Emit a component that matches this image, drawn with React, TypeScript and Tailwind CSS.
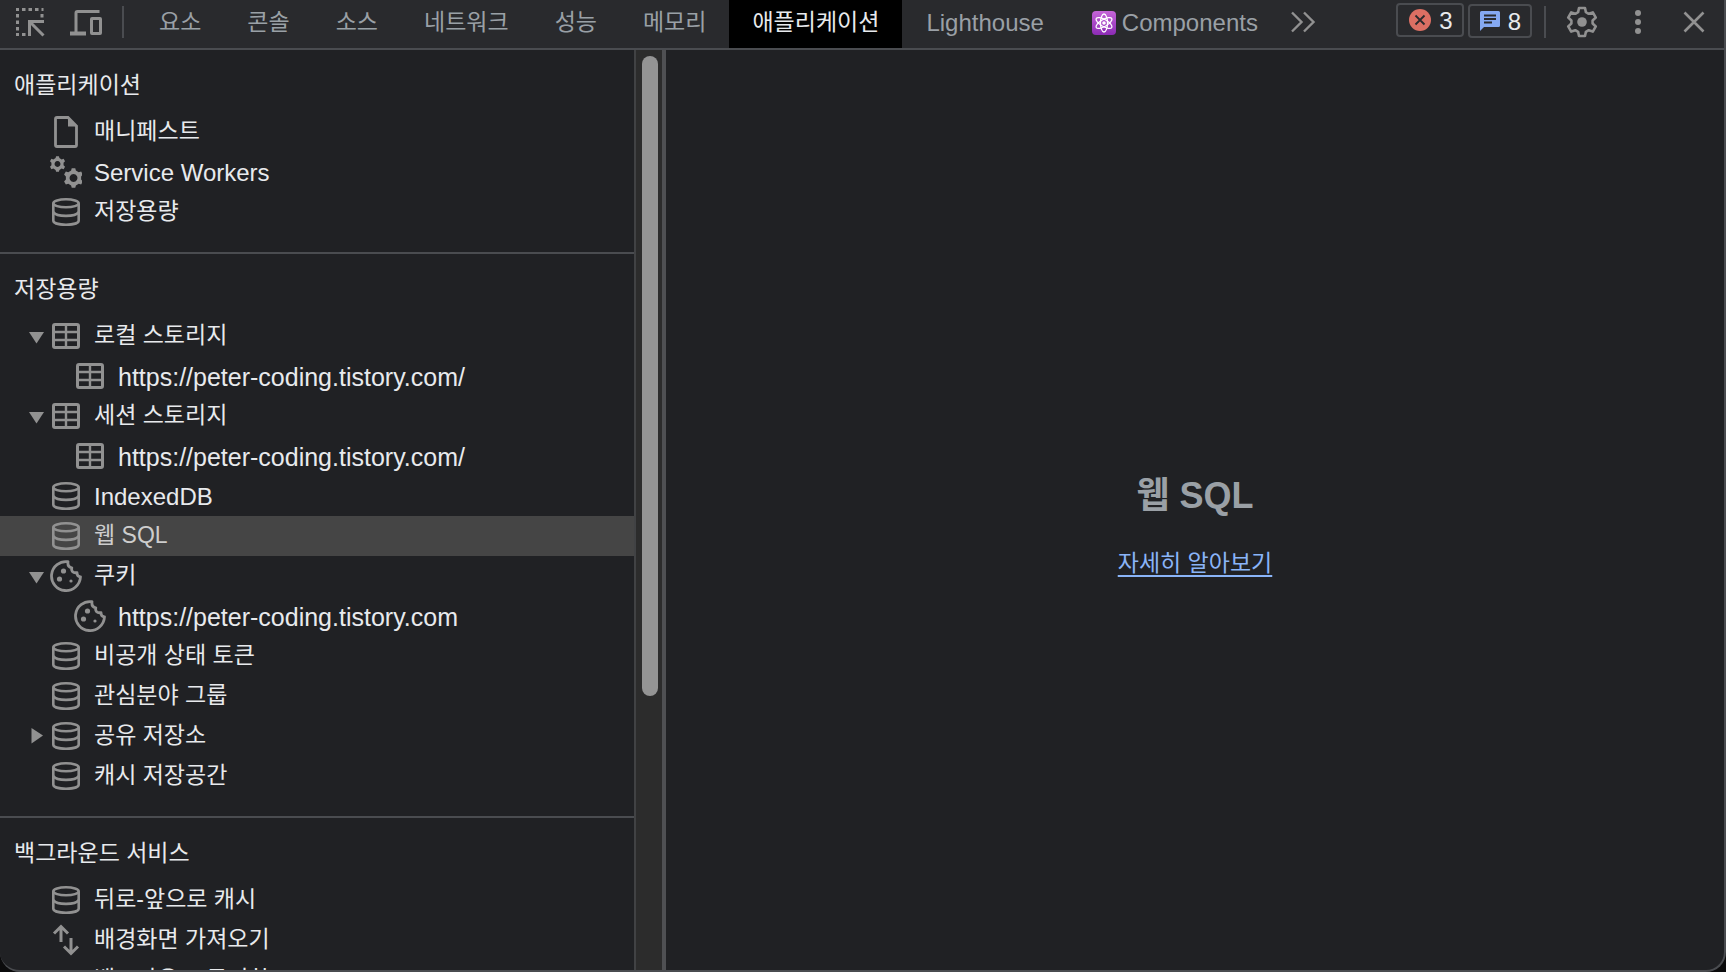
import type { ReactNode } from 'react';

type IconName = 'file' | 'gears' | 'database' | 'table' | 'cookie' | 'fetch' | 'sync';

type Item = {
  label: string;
  icon: IconName;
  latin?: boolean;
  child?: boolean;
  state?: 'open' | 'closed';
  selected?: boolean;
};

type Section = { title: string; items: Item[] };

const sections: Section[] = [
  {
    title: '애플리케이션',
    items: [
      { label: '매니페스트', icon: 'file' },
      { label: 'Service Workers', icon: 'gears', latin: true },
      { label: '저장용량', icon: 'database' },
    ],
  },
  {
    title: '저장용량',
    items: [
      { label: '로컬 스토리지', icon: 'table', state: 'open' },
      { label: 'https://peter-coding.tistory.com/', icon: 'table', child: true },
      { label: '세션 스토리지', icon: 'table', state: 'open' },
      { label: 'https://peter-coding.tistory.com/', icon: 'table', child: true },
      { label: 'IndexedDB', icon: 'database', latin: true },
      { label: '웹 SQL', icon: 'database', selected: true },
      { label: '쿠키', icon: 'cookie', state: 'open' },
      { label: 'https://peter-coding.tistory.com', icon: 'cookie', child: true },
      { label: '비공개 상태 토큰', icon: 'database' },
      { label: '관심분야 그룹', icon: 'database' },
      { label: '공유 저장소', icon: 'database', state: 'closed' },
      { label: '캐시 저장공간', icon: 'database' },
    ],
  },
  {
    title: '백그라운드 서비스',
    items: [
      { label: '뒤로-앞으로 캐시', icon: 'database' },
      { label: '배경화면 가져오기', icon: 'fetch' },
      { label: '백그라운드 동기화', icon: 'sync' },
    ],
  },
];

const tabs = ['요소', '콘솔', '소스', '네트워크', '성능', '메모리', '애플리케이션'];

function gearPath(cx: number, cy: number, outer: number, inner: number, teeth: number) {
  const step = (Math.PI * 2) / teeth;
  const points: string[] = [];
  for (let i = 0; i < teeth; i++) {
    const a = i * step - Math.PI / 2;
    const corners: [number, number][] = [
      [-0.3, inner],
      [-0.17, outer],
      [0.17, outer],
      [0.3, inner],
    ];
    for (const [offset, r] of corners) {
      const t = a + offset * step;
      points.push(`${(cx + r * Math.cos(t)).toFixed(2)} ${(cy + r * Math.sin(t)).toFixed(2)}`);
    }
  }
  return `M${points.join('L')}Z`;
}

const glyphs: Record<IconName, ReactNode> = {
  file: (
    <>
      <path d="M7 1.500h11l8.500 8.500v19q0 1.500-1.500 1.500H7q-1.500 0-1.500-1.500V3q0-1.500 1.500-1.500Z" fill="none" stroke="currentColor" strokeWidth="2.800" />
      <path d="M18 1v9.500h9.500Z" fill="currentColor" />
    </>
  ),
  gears: (
    <>
      <path d={`${gearPath(7.5, 8, 8, 6.2, 6)}M7.500 5.100a2.900 2.900 0 1 0 .01 0Z`} fill="currentColor" fillRule="evenodd" />
      <path d={`${gearPath(23.5, 22, 10, 7.8, 6)}M23.500 18.100a3.900 3.900 0 1 0 .01 0Z`} fill="currentColor" fillRule="evenodd" />
    </>
  ),
  database: (
    <g fill="none" stroke="currentColor" strokeWidth="2.600">
      <ellipse cx="16" cy="7.300" rx="12.700" ry="4" />
      <path d="M3.300 7.300v17.200c0 2.400 5.200 4.200 12.700 4.200s12.700-1.800 12.700-4.200V7.300" />
      <path d="M3.300 16c1.500 2.400 6 3.900 12.700 3.900s11.200-1.500 12.700-3.900" />
    </g>
  ),
  table: (
    <>
      <rect x="3.500" y="4.500" width="25" height="23" rx="1.500" fill="none" stroke="currentColor" strokeWidth="3" />
      <path d="M16 5v22M4 12h24M4 20h24" fill="none" stroke="currentColor" strokeWidth="2.400" />
    </>
  ),
  cookie: (
    <>
      <path d="M18 1.700A14.500 14.500 0 1 0 30.500 16.800c-2.200-.1-3.600-1.600-3.500-4.200-4 .7-6-1.500-5.200-4.700-2.800-.5-4.300-2.900-3.800-6.200Z" fill="none" stroke="currentColor" strokeWidth="2.800" strokeLinejoin="round" />
      <circle cx="13.500" cy="11" r="2.600" fill="currentColor" />
      <circle cx="9.500" cy="19" r="2.600" fill="currentColor" />
      <circle cx="21" cy="21" r="1.600" fill="currentColor" />
    </>
  ),
  fetch: (
    <path d="M11 18V2.500M4 9.500l7-7 7 7M21 14v15.500M14 22.500l7 7 7-7" fill="none" stroke="currentColor" strokeWidth="3" />
  ),
  sync: (
    <path d="M10 12.500V9M8 12l6-5M20 8.500h-5.500M22 8.500h3M21 7v8M7 18a9 9 0 0 0 6 10M25 18a9 9 0 0 1-6 10" fill="none" stroke="currentColor" strokeWidth="3" />
  ),
};

function TreeRow({ item }: { item: Item }) {
  const text = item.child ? 'pt-[2px] text-[25px]' : item.latin ? 'pt-[2px] text-2xl' : 'pb-[2px] text-[23px]';
  return (
    <li>
      <button
        type="button"
        aria-current={item.selected}
        className={`flex h-10 w-full items-center whitespace-nowrap text-left ${item.child ? 'pl-[50px]' : 'pl-[26px]'} ${
          item.selected ? 'bg-[#454545] text-[#cdcdcd]' : ''
        }`}
      >
        <span className="mr-1 flex w-5 justify-center text-[#919191]">
          {item.state === 'open' && (
            <svg viewBox="0 0 20 20" className="h-5 w-5" aria-hidden="true">
              <path d="M3 6h15l-7.500 11.500Z" fill="currentColor" />
            </svg>
          )}
          {item.state === 'closed' && (
            <svg viewBox="0 0 20 20" className="h-5 w-5" aria-hidden="true">
              <path d="M5.500 2v15.500L17 9.500Z" fill="currentColor" />
            </svg>
          )}
        </span>
        <svg viewBox="0 0 32 32" className="mr-3 h-8 w-8 shrink-0 text-[#919191]" aria-hidden="true">
          {glyphs[item.icon]}
        </svg>
        <span className={`leading-8 ${text}`}>{item.label}</span>
      </button>
    </li>
  );
}

function Divider() {
  return <span className="h-8 w-[2px] shrink-0 bg-[#4a4c50]" />;
}

function Toolbar() {
  return (
    <header className="flex h-[50px] shrink-0 items-start border-b-2 border-[#4a4c50] bg-[#292a2d] text-[#9aa0a6]">
      <div className="flex h-11 shrink-0 items-center pl-[14px] text-[#919191]">
        <button type="button" aria-label="Select element" className="mr-6">
          <svg viewBox="0 0 32 32" className="h-8 w-8" fill="none" stroke="currentColor" strokeWidth="3">
            <path d="M2 3.500h3M8 3.500h3.500M14.500 3.500H18M21 3.500h3.500M27.500 3.500h2M3.500 8v3.500M3.500 14.500V18M3.500 21v3.500M3.500 27.500v1.500M28 8v3.500M2 28.500h3M8 28.500h3.500" />
            <path d="M15.500 30V15.500H30M16 16l13.500 13.500" />
          </svg>
        </button>
        <button type="button" aria-label="Toggle device" className="mr-5">
          <svg viewBox="0 0 32 32" className="h-8 w-8" fill="none" stroke="currentColor">
            <path d="M29.500 5.500H7.500q-1.500 0-1.500 1.500v20" strokeWidth="3" />
            <path d="M0 27.500h16" strokeWidth="4" />
            <rect x="21.500" y="12.500" width="9" height="15" rx="0.500" strokeWidth="3" />
          </svg>
        </button>
        <Divider />
      </div>
      <nav className="flex h-12 min-w-0 items-center whitespace-nowrap pl-3">
        {tabs.map((tab) => (
          <button
            key={tab}
            type="button"
            className={`flex h-12 items-center px-[23px] pb-1 text-[23px] ${tab === '애플리케이션' ? 'bg-black text-[#e8eaed]' : ''}`}
          >
            {tab}
          </button>
        ))}
        <button type="button" className="flex h-12 items-center px-6 pb-[2px] text-2xl">
          Lighthouse
        </button>
        <button type="button" className="flex h-12 items-center gap-[6px] px-6 pb-[2px] text-2xl">
          <svg viewBox="0 0 24 24" className="h-6 w-6" aria-hidden="true">
            <defs>
              <linearGradient id="atom" x1="0" y1="0" x2="0" y2="1">
                <stop offset="0" stopColor="#c565d8" />
                <stop offset="1" stopColor="#8c2bb5" />
              </linearGradient>
            </defs>
            <rect width="24" height="24" rx="4" fill="url(#atom)" />
            <g fill="none" stroke="#fff" strokeWidth="1.300">
              <ellipse cx="12" cy="12" rx="3.500" ry="9" />
              <ellipse cx="12" cy="12" rx="3.500" ry="9" transform="rotate(60 12 12)" />
              <ellipse cx="12" cy="12" rx="3.500" ry="9" transform="rotate(120 12 12)" />
            </g>
            <circle cx="12" cy="12" r="1.800" fill="#fff" />
          </svg>
          Components
        </button>
        <button type="button" aria-label="More tabs" className="flex h-12 items-center pb-1 pl-2 text-[#919191]">
          <svg viewBox="0 0 26 24" className="h-6 w-[26px]" fill="none" stroke="currentColor" strokeWidth="2.400">
            <path d="M2 2.500l9.500 9.500L2 21.500M14 2.500l9.500 9.500L14 21.500" />
          </svg>
        </button>
      </nav>
      <div className="ml-auto flex h-11 shrink-0 items-center pr-[18px] text-[#919191]">
        <button type="button" className="mb-1 mr-1 flex h-[34px] items-center gap-2 rounded border-2 border-[#4a4c50] pl-[11px] pr-[9px] text-2xl text-[#e8eaed]">
          <svg viewBox="0 0 22 22" className="h-[22px] w-[22px]" aria-label="Errors">
            <circle cx="11" cy="11" r="11" fill="#db6f63" />
            <path d="M6.500 6.500l9 9M15.500 6.500l-9 9" stroke="#292a2d" strokeWidth="1.800" />
          </svg>
          <span className="pt-[2px]">3</span>
        </button>
        <button type="button" className="mb-[2px] mr-3 flex h-[34px] items-center gap-2 rounded border-2 border-[#4a4c50] pl-[10px] pr-[9px] text-2xl text-[#e8eaed]">
          <svg viewBox="0 0 20 20" className="h-5 w-5" aria-label="Issues">
            <path d="M1.500 0h17Q20 0 20 1.500v13q0 1.500-1.500 1.500H4l-4 4V1.500Q0 0 1.500 0Z" fill="#85a9f2" />
            <path d="M4 4.500h12M4 8h12M4 11.500h8" stroke="#292a2d" strokeWidth="1.800" />
          </svg>
          <span className="pt-[2px]">8</span>
        </button>
        <Divider />
        <button type="button" aria-label="Settings" className="ml-5 mr-9">
          <svg viewBox="0 0 32 32" className="h-8 w-8">
            <path
              d="M13 2h6l.9 4.200 2.800 1.600 4.100-1.400 3 5.200-3.200 2.800v3.200l3.200 2.800-3 5.200-4.100-1.400-2.800 1.600L19 30h-6l-.9-4.200-2.800-1.600-4.100 1.400-3-5.200 3.200-2.800v-3.200l-3.200-2.800 3-5.200 4.100 1.400 2.800-1.600Z"
              fill="none"
              stroke="currentColor"
              strokeWidth="2.600"
              strokeLinejoin="round"
            />
            <circle cx="16" cy="16" r="4.800" fill="currentColor" />
          </svg>
        </button>
        <button type="button" aria-label="More options" className="mr-10">
          <svg viewBox="0 0 8 26" className="h-[26px] w-2" fill="currentColor">
            <circle cx="4" cy="4" r="3" />
            <circle cx="4" cy="13" r="3" />
            <circle cx="4" cy="22" r="3" />
          </svg>
        </button>
        <button type="button" aria-label="Close">
          <svg viewBox="0 0 24 24" className="h-6 w-6" fill="none" stroke="currentColor" strokeWidth="2.600">
            <path d="M2.500 2.500l19 19M21.500 2.500l-19 19" />
          </svg>
        </button>
      </div>
    </header>
  );
}

export default function App() {
  return (
    <div className="h-screen overflow-hidden bg-[#0b0b0c]">
      <div className="flex h-full flex-col overflow-hidden rounded-b-[20px] border-b-2 border-r-2 border-[#4a4c50] bg-[#202124] font-['Liberation_Sans','Noto_Sans_CJK_KR',sans-serif] text-[#e8eaed]">
        <Toolbar />
        <div className="flex min-h-0 flex-1">
          <aside className="flex w-[666px] shrink-0 border-r-4 border-[#4f5053]">
            <div className="min-w-0 flex-1 overflow-hidden">
              {sections.map((section) => (
                <section key={section.title} className="border-b-2 border-[#4a4c50] pb-5">
                  <h2 className="h-[62px] pl-[14px] pt-[19px] text-[23px] leading-8">{section.title}</h2>
                  <ul>
                    {section.items.map((item, i) => (
                      <TreeRow key={i} item={item} />
                    ))}
                  </ul>
                </section>
              ))}
            </div>
            <div className="w-7 border-l-2 border-[#414244] bg-[#2c2c2c] pl-[6px] pt-[6px]">
              <div className="h-[70%] w-4 rounded-full bg-[#949494]" />
            </div>
          </aside>
          <main className="flex flex-1 flex-col items-center justify-center gap-[30px] pt-9">
            <h1 className="text-4xl font-bold text-[#9aa0a6]">웹 SQL</h1>
            <a href="#learn-more" className="text-[23px] text-[#8ab4f8] underline decoration-2 underline-offset-4">
              자세히 알아보기
            </a>
          </main>
        </div>
      </div>
    </div>
  );
}
